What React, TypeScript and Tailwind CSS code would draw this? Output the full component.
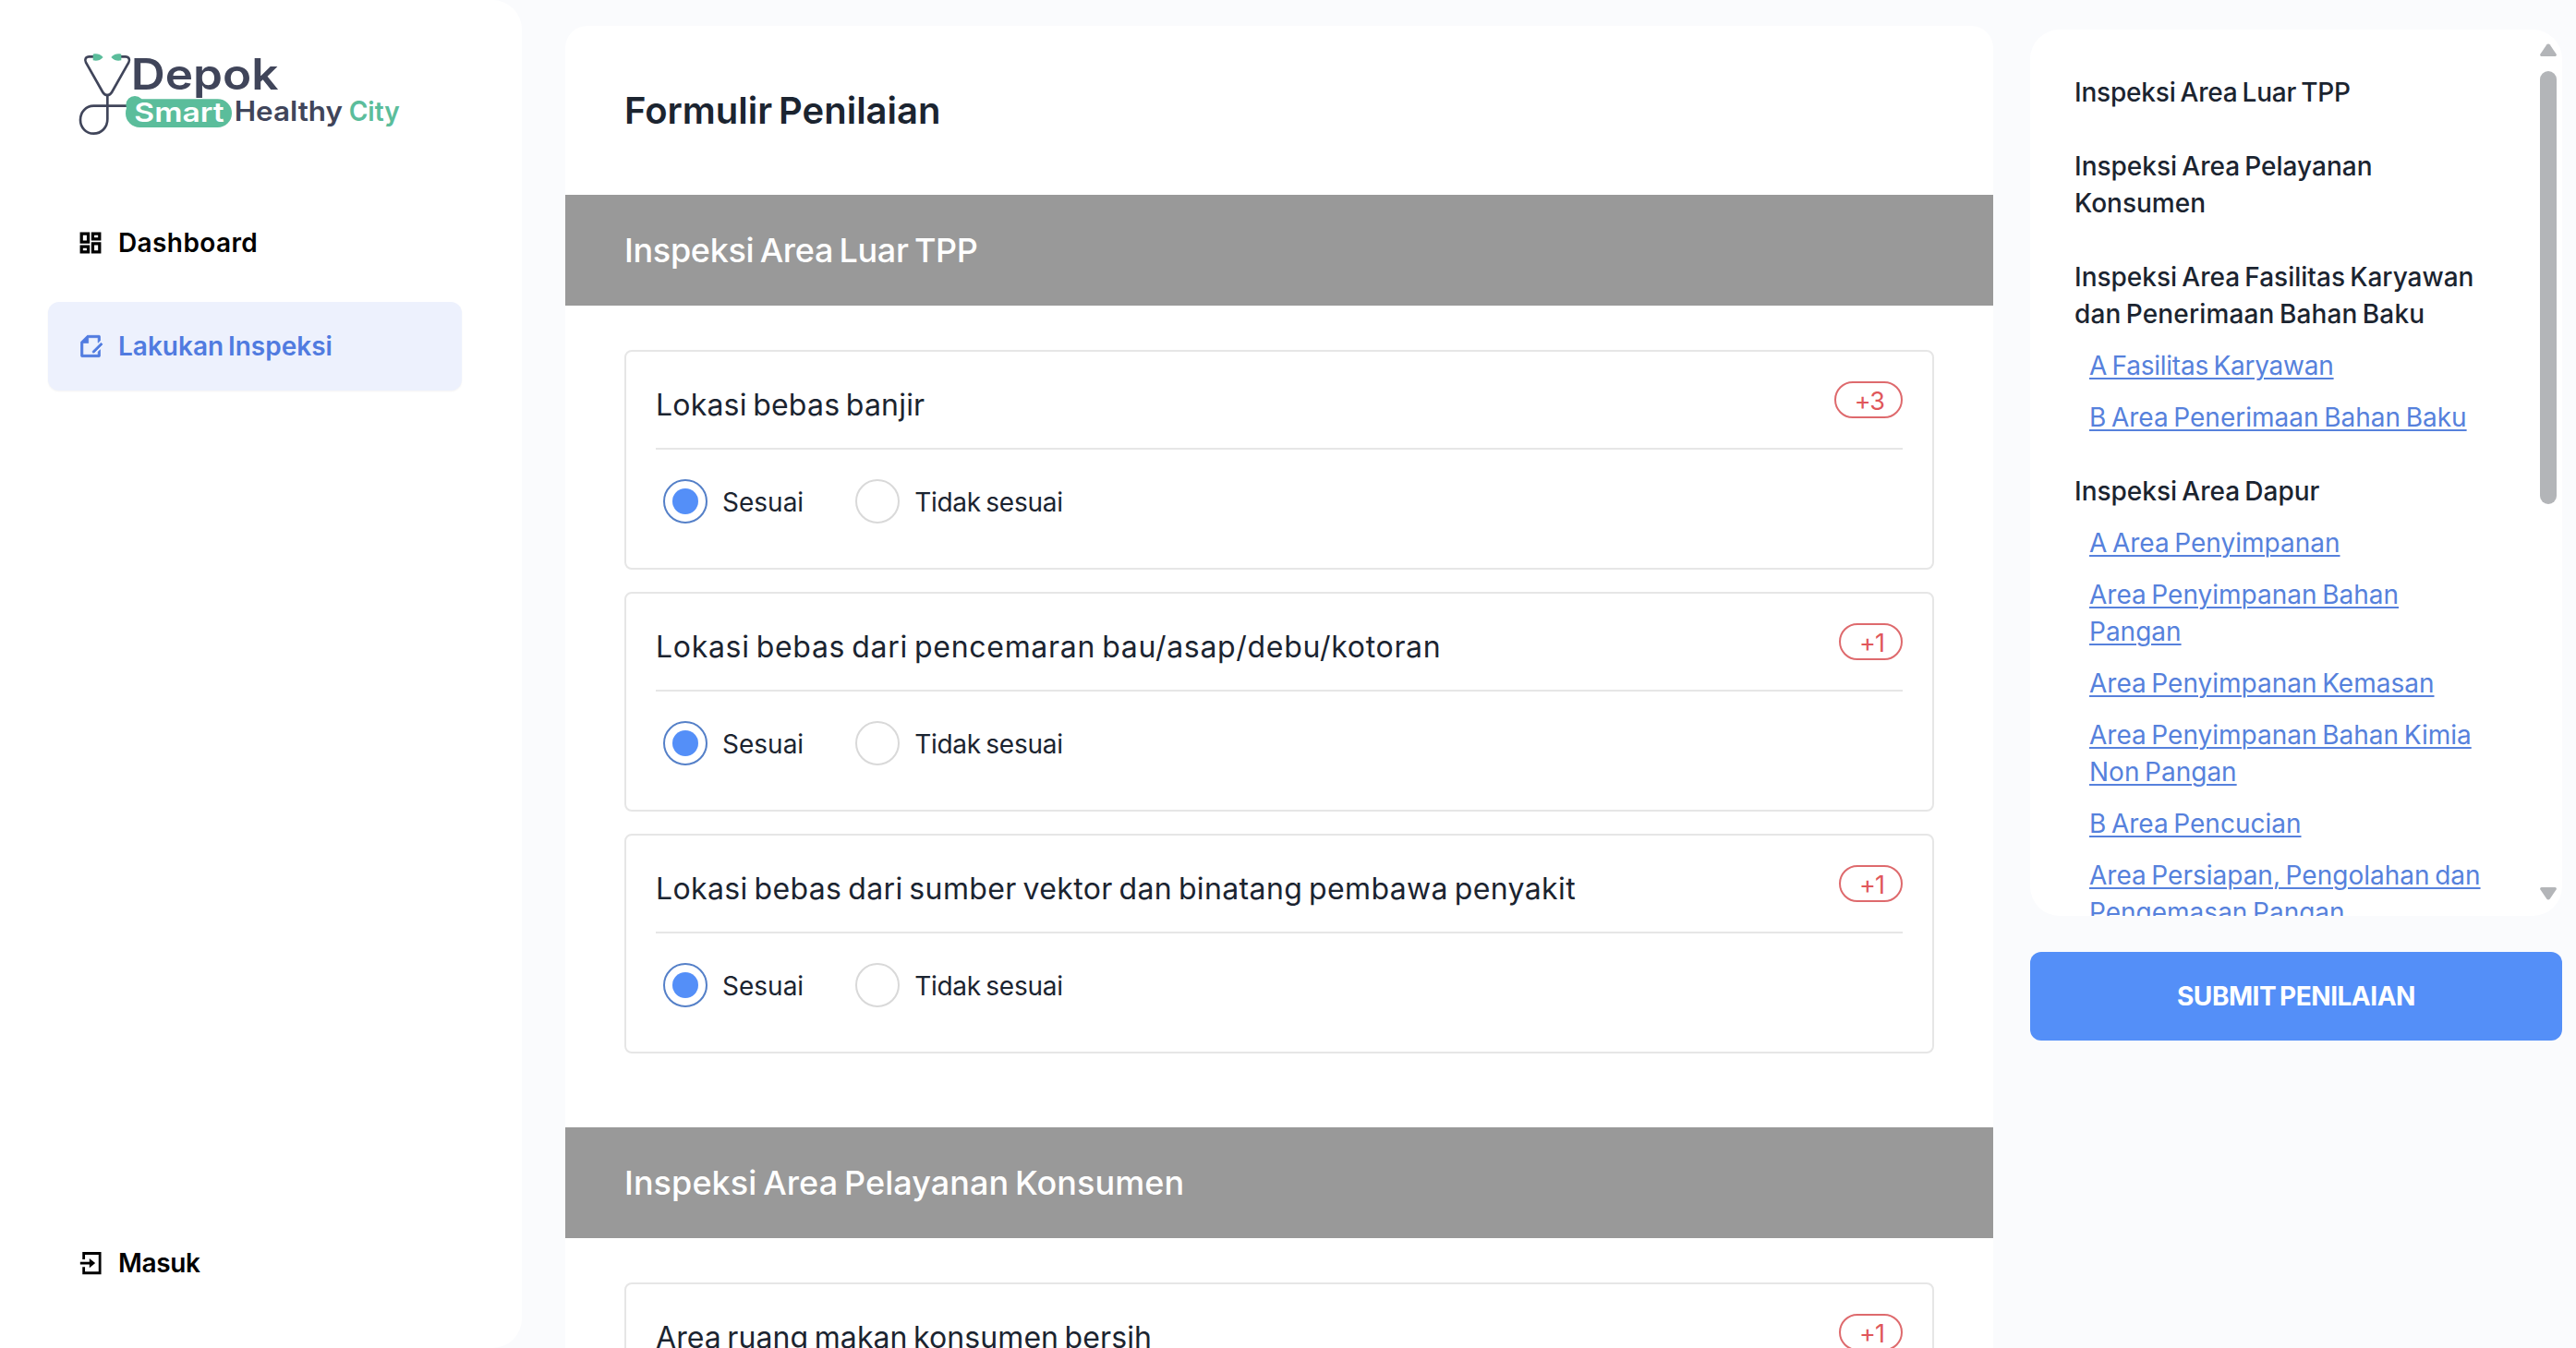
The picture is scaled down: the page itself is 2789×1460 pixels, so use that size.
import React from 'react'
import clsx from 'clsx'
import { RiFileEditLine } from 'react-icons/ri'

type Question = { text: string; score: string; tracking?: string }
type Section = { title: string; tracking?: string; questions: Question[] }
type Line = { text: string; tracking?: string }
type TocGroup = { title: Line[]; links: Line[][] }

const sections: Section[] = [
  {
    title: 'Inspeksi Area Luar TPP',
    tracking: 'tracking-[-0.009em]',
    questions: [
      { text: 'Lokasi bebas banjir', score: '+3', tracking: 'tracking-[0.006em]' },
      { text: 'Lokasi bebas dari pencemaran bau/asap/debu/kotoran', score: '+1', tracking: 'tracking-[0.0216em]' },
      { text: 'Lokasi bebas dari sumber vektor dan binatang pembawa penyakit', score: '+1', tracking: 'tracking-[0.0116em]' },
    ],
  },
  {
    title: 'Inspeksi Area Pelayanan Konsumen',
    tracking: 'tracking-[0.002em]',
    questions: [{ text: 'Area ruang makan konsumen bersih', score: '+1', tracking: 'tracking-[0.0025em]' }],
  },
]

const toc: TocGroup[] = [
  { title: [{ text: 'Inspeksi Area Luar TPP', tracking: 'tracking-[-0.007em]' }], links: [] },
  { title: [{ text: 'Inspeksi Area Pelayanan' }, { text: 'Konsumen' }], links: [] },
  {
    title: [
      { text: 'Inspeksi Area Fasilitas Karyawan' },
      { text: 'dan Penerimaan Bahan Baku', tracking: 'tracking-[0.005em]' },
    ],
    links: [
      [{ text: 'A Fasilitas Karyawan', tracking: 'tracking-[-0.008em]' }],
      [{ text: 'B Area Penerimaan Bahan Baku' }],
    ],
  },
  {
    title: [{ text: 'Inspeksi Area Dapur' }],
    links: [
      [{ text: 'A Area Penyimpanan' }],
      [{ text: 'Area Penyimpanan Bahan' }, { text: 'Pangan' }],
      [{ text: 'Area Penyimpanan Kemasan' }],
      [{ text: 'Area Penyimpanan Bahan Kimia' }, { text: 'Non Pangan' }],
      [{ text: 'B Area Pencucian' }],
      [{ text: 'Area Persiapan, Pengolahan dan' }, { text: 'Pengemasan Pangan' }],
    ],
  },
]

function Logo() {
  return (
    <svg viewBox="0 0 1200 420" className="ml-[60px] mt-[30px] h-[140px] w-[400px] shrink-0">
      {/* Stethoscope */}
      <g fill="none" stroke="#40455a" strokeWidth="8" strokeLinecap="round" strokeLinejoin="round">
        <path d="M126 94h-16c-12 0-16 10-11 19l55 97c7 12 22 12 29 0l55-97c5-9 1-19-11-19h-16" />
        <path d="M169 219v78c0 27-20 47-45 47s-43-20-43-45 18-45 43-45h108" />
      </g>
      <g fill="#5bbd9b">
        <path d="M122 86c12-3 22-1 33 10-11 11-21 13-33 10z" />
        <path d="M214 86c-12-3-22-1-33 10 11 11 21 13 33 10z" />
        <circle cx="258" cy="251" r="29" />
        <rect x="228" y="232" width="345" height="92" rx="46" />
      </g>
      <g fontFamily="Inter, sans-serif" fontWeight="600">
        <text x="245" y="202" fontSize="138" fontWeight="600" fill="#40455a" textLength="479" lengthAdjust="spacingAndGlyphs">Depok</text>
        <text x="256" y="307" fontSize="87" fill="#fff" textLength="292" lengthAdjust="spacingAndGlyphs">Smart</text>
        <text x="581" y="302" fontSize="88" fill="#40455a" textLength="352" lengthAdjust="spacingAndGlyphs">Healthy</text>
        <text x="953" y="302" fontSize="88" fill="#5bbd9b" textLength="165" lengthAdjust="spacingAndGlyphs">City</text>
      </g>
    </svg>
  )
}

function DashboardIcon() {
  return (
    <svg viewBox="0 0 24 24" className="size-7" fill="none" stroke="currentColor" strokeWidth="2.8">
      <path d="M3.6 3.6h6.3v7.6H3.600zM14.100 3.600h6.300v4.900h-6.300zM3.600 15.500h6.300v4.900H3.600zM14.100 12.800h6.300v7.600h-6.300z" />
    </svg>
  )
}

function LoginIcon() {
  return (
    <svg viewBox="0 0 24 24" className="size-7" fill="none" stroke="currentColor" strokeWidth="2.4">
      <path d="M5.7 8.6V3h15v18.2h-15v-5.6" />
      <path d="M2.4 12.1h10" />
      <path d="M11 7.7l5.4 4.4-5.4 4.4z" fill="currentColor" stroke="none" />
    </svg>
  )
}

function NavItem({
  icon,
  label,
  active,
  tracking,
}: {
  icon: React.ReactNode
  label: string
  active?: boolean
  tracking?: string
}) {
  return (
    <a
      className={clsx(
        'flex h-24 w-[448px] items-center gap-4 rounded-xl pl-8 text-[28px] font-semibold',
        active ? 'bg-[#edf1fd] text-[#507be0] shadow-xs' : 'text-black'
      )}
    >
      {icon}
      <span className={tracking}>{label}</span>
    </a>
  )
}

function Sidebar() {
  return (
    <aside className="flex w-[565px] shrink-0 flex-col rounded-r-[32px] bg-white">
      <Logo />
      <nav className="ml-[52px] mt-[45px] flex flex-1 flex-col gap-4 pb-11">
        <NavItem icon={<DashboardIcon />} label="Dashboard" tracking="tracking-[0.014em]" />
        <NavItem
          icon={<RiFileEditLine className="size-7" stroke="currentColor" strokeWidth={0.6} />}
          label="Lakukan Inspeksi"
          active
        />
        <div className="mt-auto">
          <NavItem icon={<LoginIcon />} label="Masuk" tracking="tracking-[-0.013em]" />
        </div>
      </nav>
    </aside>
  )
}

function RadioOption({ label, checked, tracking }: { label: string; checked?: boolean; tracking?: string }) {
  return (
    <label className="flex items-center gap-4">
      <span
        className={clsx(
          'flex size-12 items-center justify-center rounded-full border-2',
          checked ? 'border-[#5580c8]' : 'border-[#d9d9d9]'
        )}
      >
        {checked && <span className="size-7 rounded-full bg-[#548ff8]" />}
      </span>
      <span className={clsx('pt-0.5 text-[28px] leading-10', tracking)}>{label}</span>
    </label>
  )
}

function QuestionCard({ question }: { question: Question }) {
  return (
    <div className="h-[238px] shrink-0 rounded-lg border-2 border-[#e6e6e6] px-8 pt-8">
      <div className="flex h-[74px] items-start justify-between border-b-2 border-[#e6e6e6]">
        <h3 className={clsx('whitespace-nowrap pt-1.5 text-[32px] leading-10', question.tracking)}>{question.text}</h3>
        <span className="flex h-10 items-center rounded-full border-2 border-[#de6a6d] pl-5 pr-[18px] pt-0.5 text-[27px] leading-none tracking-[-0.035em] text-[#e0575b]">
          {question.score}
        </span>
      </div>
      <div className="flex gap-14 pl-2 pt-8">
        <RadioOption label="Sesuai" checked />
        <RadioOption label="Tidak sesuai" tracking="tracking-[-0.0093em]" />
      </div>
    </div>
  )
}

function TextLines({ lines }: { lines: Line[] }) {
  return (
    <>
      {lines.map((line) => (
        <span key={line.text} className={clsx('block whitespace-nowrap', line.tracking)}>
          {line.text}
        </span>
      ))}
    </>
  )
}

function TocPanel() {
  return (
    <div className="flex h-[960px] overflow-hidden rounded-[32px] bg-white text-[28px] leading-10">
      <div className="flex flex-1 flex-col gap-10 pl-12 pt-12">
        {toc.map((group, index) => (
          <div key={index} className="flex flex-col gap-4">
            <h4 className="font-medium">
              <TextLines lines={group.title} />
            </h4>
            {group.links.map((link) => (
              <a
                key={link[0].text}
                className="ml-4 text-[#5681dc] underline decoration-2 underline-offset-[3px]"
              >
                <TextLines lines={link} />
              </a>
            ))}
          </div>
        ))}
      </div>

      {/* Scrollbar */}
      <div className="flex w-6 shrink-0 flex-col pb-[17px] pt-[15px]">
        <svg viewBox="0 0 18 14" className="h-3.5 w-[18px]" fill="#b3b5b8">
          <path d="M7.4 1.2a2 2 0 0 1 3.2 0l7 10.3c.7 1.100 0 2.500-1.300 2.500H1.700C.4 14-.3 12.600.4 11.500z" />
        </svg>
        <div className="mt-4 h-[469px] w-[18px] rounded-full bg-[#b3b5b8]" />
        <svg viewBox="0 0 18 14" className="mt-auto h-3.5 w-[18px] rotate-180" fill="#b3b5b8">
          <path d="M7.4 1.2a2 2 0 0 1 3.2 0l7 10.3c.7 1.100 0 2.500-1.300 2.500H1.700C.4 14-.3 12.600.4 11.500z" />
        </svg>
      </div>
    </div>
  )
}

export default function App() {
  return (
    <div className="flex h-[1460px] w-[2789px] overflow-hidden bg-[#fafbfd] font-['Inter',sans-serif] text-[#1b2430] [&_*]:[word-spacing:-0.08em]">
      <Sidebar />

      <main className="ml-[47px] mt-7 flex w-[1546px] shrink-0 flex-col rounded-t-3xl bg-white">
        <h1 className="flex h-[183px] shrink-0 items-center pl-16 text-[40px] font-semibold">Formulir Penilaian</h1>
        {sections.map((section) => (
          <section key={section.title} className="mb-20 shrink-0">
            <h2 className="flex h-[120px] items-center bg-[#999] pl-16 text-[36px] font-medium text-white">
              <span className={section.tracking}>{section.title}</span>
            </h2>
            <div className="flex flex-col gap-6 px-16 pt-12">
              {section.questions.map((question) => (
                <QuestionCard key={question.text} question={question} />
              ))}
            </div>
          </section>
        ))}
      </main>

      <aside className="ml-10 mt-8 flex w-[576px] shrink-0 flex-col gap-[39px]">
        <TocPanel />
        <button className="h-24 rounded-xl bg-[#548ff8] text-[28px] font-bold tracking-[-0.017em] text-white">
          SUBMIT PENILAIAN
        </button>
      </aside>
    </div>
  )
}
